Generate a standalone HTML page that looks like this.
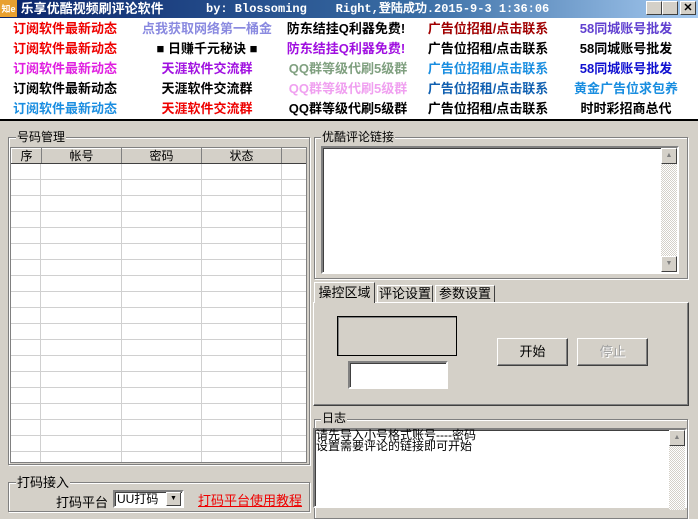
<!DOCTYPE html>
<html><head><meta charset="utf-8"><style>
*{margin:0;padding:0;box-sizing:border-box}
body{width:698px;height:505px;overflow:hidden;background:#d4d0c8;position:relative;font-family:"Liberation Sans","Noto Sans CJK SC","WenQuanYi Zen Hei",sans-serif;font-size:12px;color:#000}
.a{position:absolute}
.title{left:0;top:0;width:698px;height:18px;background:linear-gradient(90deg,#0a246a,#3a6ea5 60%,#a6caf0);color:#fff;font-weight:bold;font-size:13px;line-height:18px}
.ads{left:0;top:18px;width:698px;height:103px;background:#fff;border-bottom:2px solid #000}
.ad{position:absolute;font-weight:bold;font-size:13px;white-space:nowrap;transform:translateX(-50%);line-height:20px}
.grp{position:absolute;border:1px solid #808080;box-shadow:inset 1px 1px 0 #fff,1px 1px 0 #fff}
.lbl{position:absolute;background:#d4d0c8;padding:0 1px;font-size:12px;line-height:13px}
.sunk{position:absolute;background:#fff;border:2px solid;border-color:#808080 #fff #fff #808080;box-shadow:inset 1px 1px 0 #404040}
.btn{position:absolute;background:#d4d0c8;border:1px solid;border-color:#fff #404040 #404040 #fff;box-shadow:inset -1px -1px 0 #808080;text-align:center;font-size:13px}
.sb{position:absolute;background:repeating-conic-gradient(#d4d0c8 0 25%,#fff 0 50%) 0 0/2px 2px}
.sbb{position:absolute;width:16px;height:16px;background:#d4d0c8;border:1px solid;border-color:#fff #404040 #404040 #fff;font-size:7px;text-align:center;line-height:14px;color:#808080}
table{border-collapse:collapse}
</style></head><body>
<div class="a title"><span style="display:inline-block;width:17px;height:17px;background:#e8a030;color:#fff;font-size:9px;vertical-align:top;text-align:center">知e</span> 乐享优酷视频刷评论软件<span style="position:absolute;left:206px;font-family:'Liberation Mono',monospace;font-size:12px">by: Blossoming&nbsp;&nbsp;&nbsp;&nbsp;Right,登陆成功.2015-9-3 1:36:06</span>
<span style="position:absolute;left:646px;top:1px;width:16px;height:14px;background:#d4d0c8;border:1px solid;border-color:#fff #404040 #404040 #fff"></span>
<span style="position:absolute;left:662px;top:1px;width:16px;height:14px;background:#d4d0c8;border:1px solid;border-color:#fff #404040 #404040 #fff"></span>
<span style="position:absolute;left:680px;top:1px;width:16px;height:14px;background:#d4d0c8;border:1px solid;border-color:#fff #404040 #404040 #fff;color:#000;font-size:11px;line-height:12px;text-align:center">✕</span></div>
<div class="a ads">
<div class="ad" style="left:65px;top:1px;color:#e00">订阅软件最新动态</div>
<div class="ad" style="left:65px;top:21px;color:#e00">订阅软件最新动态</div>
<div class="ad" style="left:65px;top:41px;color:#e020e0">订阅软件最新动态</div>
<div class="ad" style="left:65px;top:61px;color:#000">订阅软件最新动态</div>
<div class="ad" style="left:65px;top:81px;color:#1a8ee0">订阅软件最新动态</div>
<div class="ad" style="left:207px;top:1px;color:#8a8ae0">点我获取网络第一桶金</div>
<div class="ad" style="left:207px;top:21px;color:#000">■ 日赚千元秘诀 ■</div>
<div class="ad" style="left:207px;top:41px;color:#a010e0">天涯软件交流群</div>
<div class="ad" style="left:207px;top:61px;color:#000">天涯软件交流群</div>
<div class="ad" style="left:207px;top:81px;color:#e00">天涯软件交流群</div>
<div class="ad" style="left:346px;top:1px;color:#000">防东结挂Q利器免费!</div>
<div class="ad" style="left:346px;top:21px;color:#a010e0">防东结挂Q利器免费!</div>
<div class="ad" style="left:348px;top:41px;color:#80a080">QQ群等级代刷5级群</div>
<div class="ad" style="left:348px;top:61px;color:#f0a0f0">QQ群等级代刷5级群</div>
<div class="ad" style="left:348px;top:81px;color:#000">QQ群等级代刷5级群</div>
<div class="ad" style="left:488px;top:1px;color:#a00000">广告位招租/点击联系</div>
<div class="ad" style="left:488px;top:21px;color:#000">广告位招租/点击联系</div>
<div class="ad" style="left:488px;top:41px;color:#1a8ee0">广告位招租/点击联系</div>
<div class="ad" style="left:488px;top:61px;color:#1060b0">广告位招租/点击联系</div>
<div class="ad" style="left:488px;top:81px;color:#000">广告位招租/点击联系</div>
<div class="ad" style="left:626px;top:1px;color:#6040d0">58同城账号批发</div>
<div class="ad" style="left:626px;top:21px;color:#000">58同城账号批发</div>
<div class="ad" style="left:626px;top:41px;color:#1010d0">58同城账号批发</div>
<div class="ad" style="left:626px;top:61px;color:#1a8ee0">黄金广告位求包养</div>
<div class="ad" style="left:626px;top:81px;color:#000">时时彩招商总代</div>
</div>

<div class="grp" style="left:8px;top:137px;width:302px;height:328px"></div>
<div class="lbl" style="left:16px;top:131px">号码管理</div>
<div class="a" style="left:10px;top:147px;width:297px;height:316px;background:#fff;border:1px solid #808080;overflow:hidden">
<table style="width:296px;font-size:12px">
<tr style="height:15px;background:#d4d0c8">
<td style="width:30px;border:1px solid;border-color:#fff #808080 #404040 #fff;text-align:center;line-height:12px">序</td>
<td style="width:80px;border:1px solid;border-color:#fff #808080 #404040 #fff;text-align:center;line-height:12px">帐号</td>
<td style="width:80px;border:1px solid;border-color:#fff #808080 #404040 #fff;text-align:center;line-height:12px">密码</td>
<td style="width:80px;border:1px solid;border-color:#fff #808080 #404040 #fff;text-align:center;line-height:12px">状态</td>
<td style="border:1px solid;border-color:#fff #808080 #404040 #fff"></td></tr>
</table>
<div style="position:absolute;left:0;top:16px;width:296px;height:300px;background:repeating-linear-gradient(180deg,#fff 0 15px,#d0d0d0 15px 16px)"></div>
<div style="position:absolute;top:16px;left:29px;width:1px;height:300px;background:#d0d0d0"></div>
<div style="position:absolute;top:16px;left:110px;width:1px;height:300px;background:#d0d0d0"></div>
<div style="position:absolute;top:16px;left:190px;width:1px;height:300px;background:#d0d0d0"></div>
<div style="position:absolute;top:16px;left:270px;width:1px;height:300px;background:#d0d0d0"></div>
</div>

<div class="grp" style="left:8px;top:482px;width:302px;height:30px"></div>
<div class="lbl" style="left:16px;top:476px;font-size:13px">打码接入</div>
<div class="a" style="left:56px;top:492px;font-size:13px">打码平台</div>
<div class="sunk" style="left:113px;top:490px;width:71px;height:18px;font-size:12px;line-height:14px;padding-left:2px">UU打码</div>
<div class="a" style="left:166px;top:492px;width:15px;height:14px;background:#d4d0c8;border:1px solid;border-color:#fff #404040 #404040 #fff;font-size:7px;text-align:center;line-height:12px">▼</div>
<div class="a" style="left:198px;top:490px;color:#e00;text-decoration:underline;font-size:13px">打码平台使用教程</div>

<div class="grp" style="left:314px;top:137px;width:374px;height:142px"></div>
<div class="lbl" style="left:321px;top:131px">优酷评论链接</div>
<div class="sunk" style="left:321px;top:146px;width:358px;height:128px"></div>
<div class="sb" style="left:661px;top:148px;width:16px;height:124px"></div>
<div class="sbb" style="left:661px;top:148px">▲</div>
<div class="sbb" style="left:661px;top:256px">▼</div>

<div class="a" style="left:313px;top:302px;width:376px;height:104px;border:1px solid;border-color:#fff #404040 #404040 #fff;box-shadow:inset -1px -1px 0 #808080"></div>
<div class="a" style="left:314px;top:282px;width:61px;height:21px;background:#d4d0c8;border:1px solid;border-color:#fff #404040 transparent #fff;border-bottom:none;font-size:13px;line-height:20px;text-align:center">操控区域</div>
<div class="a" style="left:377px;top:285px;width:56px;height:17px;border:1px solid;border-color:#fff #404040 transparent #fff;border-bottom:none;font-size:13px;line-height:16px;text-align:center">评论设置</div>
<div class="a" style="left:435px;top:285px;width:60px;height:17px;border:1px solid;border-color:#fff #404040 transparent #fff;border-bottom:none;font-size:13px;line-height:16px;text-align:center">参数设置</div>
<div class="a" style="left:337px;top:316px;width:120px;height:40px;border:1px solid #000;box-shadow:inset 1px 1px 0 #808080"></div>
<div class="sunk" style="left:348px;top:361px;width:100px;height:28px"></div>
<div class="btn" style="left:497px;top:338px;width:71px;height:28px;line-height:26px">开始</div>
<div class="btn" style="left:577px;top:338px;width:71px;height:28px;line-height:26px;color:#a0a0a0;text-shadow:1px 1px 0 #fff">停止</div>

<div class="grp" style="left:314px;top:419px;width:374px;height:100px"></div>
<div class="lbl" style="left:321px;top:412px">日志</div>
<div class="sunk" style="left:313px;top:428px;width:374px;height:80px;padding:0 0 0 1px;font-size:12px;line-height:11px;color:#000">请先导入小号格式账号----密码<br>设置需要评论的链接即可开始</div>
<div class="sb" style="left:669px;top:430px;width:16px;height:80px"></div>
<div class="sbb" style="left:669px;top:430px">▲</div>
</body></html>
